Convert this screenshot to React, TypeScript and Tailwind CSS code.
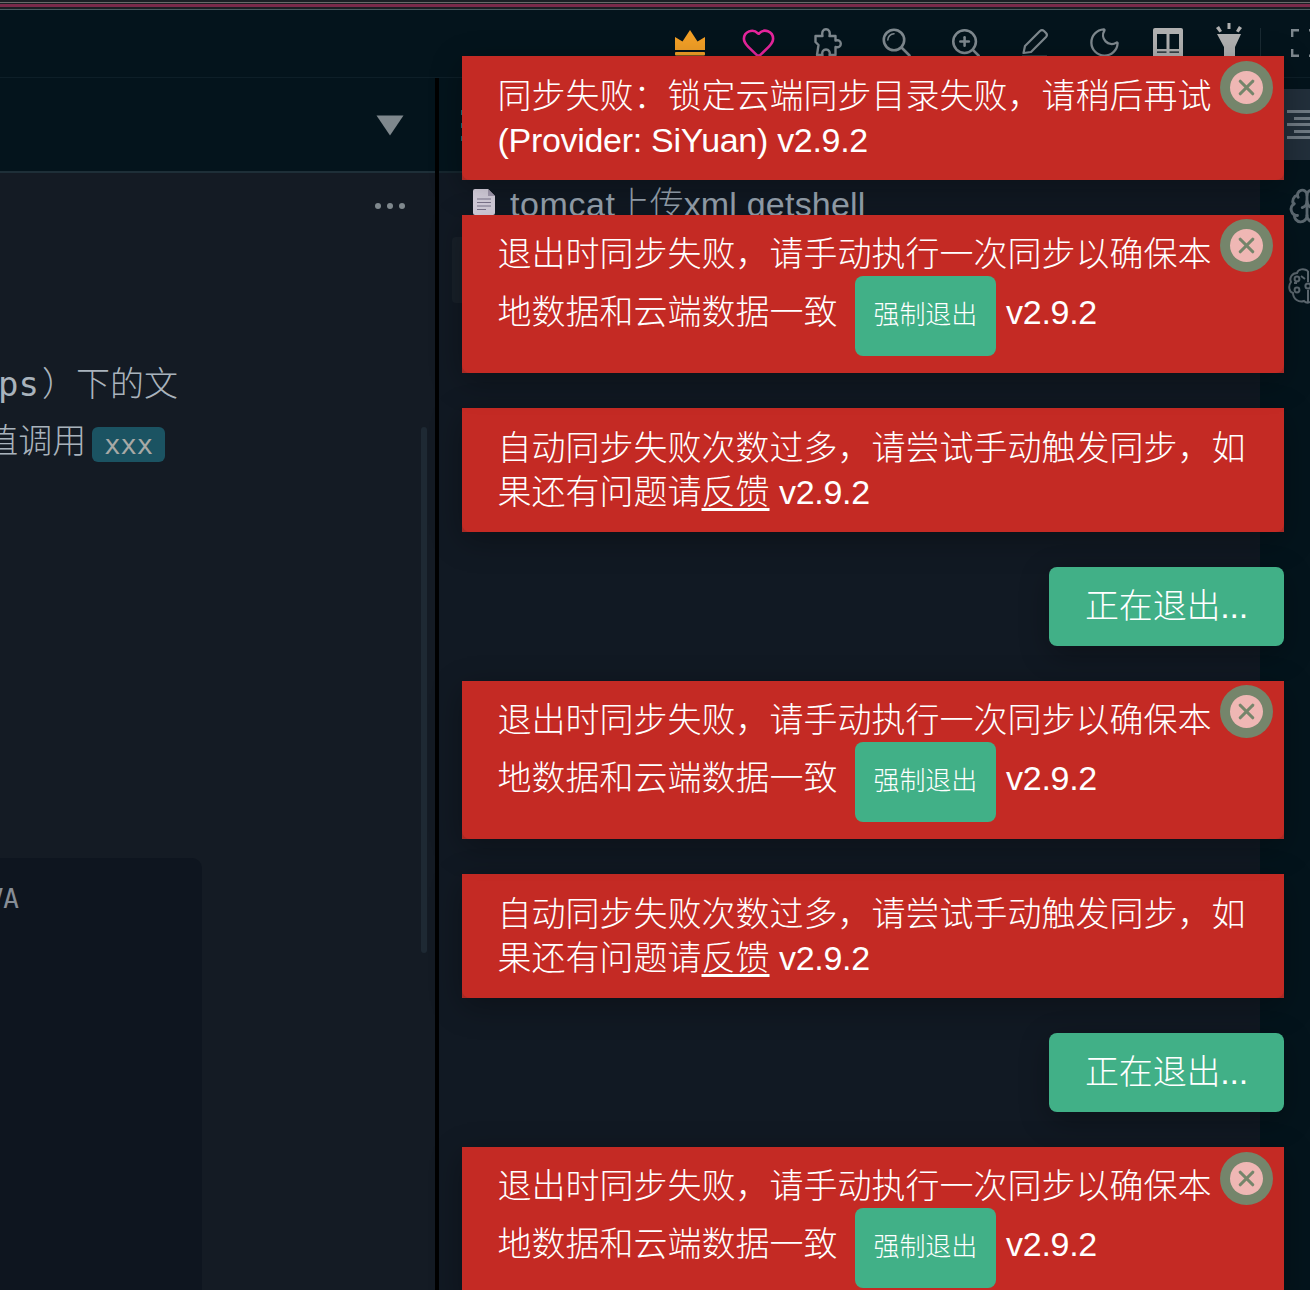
import { Brain, Heart, Moon, X, ZoomIn } from "lucide-react";

function CrownIcon() {
  return (
    <svg width="30" height="26" viewBox="0 0 30 26" fill="#f29f26">
      <path d="M0 7 L7.5 11.5 L15 0 L22.5 11.5 L30 7 V20 H0 Z" />
      <rect x="0" y="22" width="30" height="3.5" rx="1" />
    </svg>
  );
}

function PuzzleIcon() {
  return (
    <svg width="29" height="29" viewBox="0 0 29 29" fill="none" stroke="#7e888e" strokeWidth="2.4" strokeLinejoin="round">
      <path d="M2.5 8 H9.5 C8.5 3.5 10.5 1.2 13 1.2 C15.5 1.2 17.5 3.5 16.5 8 H22.5 V12.5 C26 11.5 27.8 13.5 27.8 15.8 C27.8 18 26 20 22.5 19 V27 H16.5 C17.5 23.5 15.5 21.5 13 21.5 C10.5 21.5 8.5 23.5 9.5 27 H4 L5.5 17 L2.5 14 Z" />
    </svg>
  );
}

function SearchIcon() {
  return (
    <svg width="29" height="29" viewBox="0 0 29 29" fill="none" stroke="#7e888e" strokeWidth="2.6" strokeLinecap="round">
      <circle cx="12" cy="12" r="10.2" />
      <path d="M5.8 12 A6.2 6.2 0 0 1 12 5.8" strokeWidth="1.6" />
      <path d="M20 20 L27.5 27.5" />
    </svg>
  );
}

function PencilIcon() {
  return (
    <svg width="28" height="29" viewBox="0 0 28 29" fill="none" stroke="#7e888e" strokeWidth="2.2" strokeLinejoin="round">
      <path d="M2.5 25 L4 18 L19 3 Q21 1.2 23 3 L25 5 Q26.8 7 25 9 L10 24 Z" />
      <path d="M1 28 H26" stroke="#3a474e" strokeWidth="1.4" />
    </svg>
  );
}

function BookIcon() {
  return (
    <svg width="30" height="32" viewBox="0 0 30 32" fill="#b0b0b0">
      <path d="M2 0 H28 A2 2 0 0 1 30 2 V32 H0 V2 A2 2 0 0 1 2 0 Z" />
      <rect x="4" y="6" width="9.5" height="15" fill="#04141c" />
      <rect x="16.5" y="6" width="9.5" height="15" fill="#04141c" />
      <rect x="4" y="23.5" width="9.5" height="1.2" fill="#04141c" />
      <rect x="16.5" y="23.5" width="9.5" height="1.2" fill="#04141c" />
    </svg>
  );
}

function TorchIcon() {
  return (
    <svg width="30" height="36" viewBox="0 0 30 36" fill="#b0b0b0">
      <rect x="13.5" y="0" width="3" height="6" />
      <path d="M2 5 L5 3 L8 8 L5.5 9.5 Z" />
      <path d="M28 5 L25 3 L22 8 L24.5 9.5 Z" />
      <path d="M3 11 H27 L21 24 V36 H10 V24 Z" />
    </svg>
  );
}

function FullscreenIcon() {
  return (
    <svg width="28" height="28" viewBox="0 0 28 28" fill="none" stroke="#7e888e" strokeWidth="2.4">
      <path d="M8 1.2 H1.2 V8" />
      <path d="M18 1.2 H26.8 V8" />
      <path d="M8 26.8 H1.2 V20" />
      <path d="M18 26.8 H26.8 V20" />
    </svg>
  );
}

function FileIcon() {
  return (
    <svg width="22" height="26" viewBox="0 0 22 26" className="mb-[4px] shrink-0">
      <path d="M2 0 H15 L22 7 V24 A2 2 0 0 1 20 26 H2 A2 2 0 0 1 0 24 V2 A2 2 0 0 1 2 0 Z" fill="#dcd6e4" />
      <path d="M15 0 L22 7 H15 Z" fill="#a79fb4" />
      <path d="M4 10 H18 M4 13.5 H18 M4 17 H18 M4 20.5 H13" stroke="#7f7890" strokeWidth="1.2" />
    </svg>
  );
}

function CircuitBrainIcon() {
  return (
    <svg width="40" height="36" viewBox="0 0 40 36" fill="none" stroke="#5c6870" strokeWidth="2" className="mt-[43px]">
      <path d="M20 3 C16 0 10 1 9 5 C4 5 1 10 3 14 C0 18 1 24 5 25 C5 31 11 35 16 33 C18 35 20 35 22 34" />
      <path d="M20 3 V14 M20 22 V34 M9 15 H6 M13 8 L17 11" />
      <circle cx="9" cy="11" r="2.4" />
      <circle cx="9" cy="22" r="2.4" />
      <circle cx="20" cy="18" r="2.6" />
    </svg>
  );
}

function CloseButton({ top }: { top: string }) {
  return (
    <div className={`absolute right-[11px] flex h-[53px] w-[53px] items-center justify-center rounded-full bg-[#75856b] ${top}`}>
      <div className="flex h-[33px] w-[33px] items-center justify-center rounded-full bg-[#efb7b4]">
        <X size={25} strokeWidth={3} color="#75856b" />
      </div>
    </div>
  );
}

function SyncFailed({ closeTop = "top-[4px]" }: { closeTop?: string }) {
  return (
    <div className="relative w-full bg-[#a82a25] text-white">
      <div className="rounded-b-[8px] bg-[#c42a24] pb-[17px] pl-[35.5px] pr-[70px] pt-[17px] leading-[44px]">
        退出时同步失败，请手动执行一次同步以确保本
        <br />
        地数据和云端数据一致
        <span className="ml-[17px] mr-[10px] inline-block rounded-[8px] bg-[#41b087] px-[19px] pb-[18px] pt-[16px] text-[26px] leading-[46px] tracking-[-0.1px]">
          强制退出
        </span>
        <span className="tracking-[-0.3px]">v2.9.2</span>
      </div>
      <CloseButton top={closeTop} />
    </div>
  );
}

function TooManyFailures() {
  return (
    <div className="w-full bg-[#a82a25] text-white">
      <div className="rounded-b-[8px] bg-[#c42a24] py-[17.5px] pl-[35.5px] pr-9 leading-[44.5px]">
        自动同步失败次数过多，请尝试手动触发同步，如果还有问题请<span className="underline underline-offset-4">反馈</span> <span className="tracking-[-0.3px]">v2.9.2</span>
      </div>
    </div>
  );
}

function Exiting() {
  return (
    <div className="rounded-[8px] bg-[#41b087] px-9 pb-[17.5px] pt-[16.5px] leading-[45px] tracking-[-0.2px] text-white">正在退出...</div>
  );
}

export default function App() {
  return (
    <div className="relative h-[1290px] w-full overflow-hidden bg-[#04141c] font-['Liberation_Sans','Noto_Sans_CJK_SC',sans-serif] text-[34px] font-light">
      {/* window stripes */}
      <div className="flex h-[10px] flex-col bg-[#1b1f24]">
        <div className="mt-[2px] h-px bg-[#6a6a6a]" />
        <div className="mt-px h-[3px] bg-[#7a2a4a]" />
        <div className="mt-[1.5px] h-px bg-[#4a5a60]" />
      </div>

      {/* toolbar */}
      <div className="flex h-[68px] items-center overflow-hidden border-b border-[#0e1f28] pb-[2px] pl-[655px]">
        <div className="flex w-[69px] shrink-0 justify-center"><CrownIcon /></div>
        <div className="flex w-[69px] shrink-0 justify-center"><Heart size={35} strokeWidth={1.8} color="#e6259c" /></div>
        <div className="flex w-[69px] shrink-0 justify-center"><PuzzleIcon /></div>
        <div className="flex w-[69px] shrink-0 justify-center"><SearchIcon /></div>
        <div className="flex w-[69px] shrink-0 justify-center"><ZoomIn size={34} strokeWidth={1.8} color="#7e888e" /></div>
        <div className="flex w-[70px] shrink-0 justify-center"><PencilIcon /></div>
        <div className="flex w-[69px] shrink-0 justify-center"><Moon size={35} strokeWidth={1.6} color="#7e888e" /></div>
        <div className="flex w-[58px] shrink-0 justify-center pt-[2px]"><BookIcon /></div>
        <div className="flex w-[63px] shrink-0 justify-center pb-[4px]"><TorchIcon /></div>
        <div className="h-[30px] w-px shrink-0 bg-[#1a2a32]" />
        <div className="ml-[30px] shrink-0"><FullscreenIcon /></div>
      </div>

      <div className="flex h-[1212px]">
        {/* left panel */}
        <div className="relative flex w-[435px] flex-col bg-[#141b24]">
          <div className="flex h-[95px] items-center justify-end border-b-2 border-[#1e2f38] bg-[#04141c] pr-[31px] pt-[2px]">
            <svg width="28" height="21" viewBox="0 0 28 21" fill="#7f888d">
              <path d="M0.5 0.5 H27.5 L14 20.5 Z" />
            </svg>
          </div>
          <div className="flex justify-end gap-[6px] pr-[30px] pt-[30px]">
            <div className="h-[6px] w-[6px] rounded-full bg-[#7f888d]" />
            <div className="h-[6px] w-[6px] rounded-full bg-[#7f888d]" />
            <div className="h-[6px] w-[6px] rounded-full bg-[#7f888d]" />
          </div>
          <div className="mt-[147px] flex w-[178px] justify-end overflow-hidden whitespace-nowrap leading-[57px] text-[#a9b3bc]">
            <span className="mr-[3px] font-['DejaVu_Sans_Mono',monospace]">ps</span>）下的文
          </div>
          <div className="flex w-[165px] items-center justify-end overflow-hidden whitespace-nowrap leading-[57px] text-[#a9b3bc]">
            <span className="shrink-0">值调用</span>
            <span className="ml-[6px] mt-[6px] shrink-0 rounded-[6px] bg-[#1b5362] px-[12px] font-['DejaVu_Sans_Mono',monospace] text-[27px] font-normal leading-[35px] text-[#a7a9a6]">
              xxx
            </span>
          </div>
          <div className="mt-auto h-[432px] w-[202px] overflow-hidden rounded-tr-[10px] bg-[#0e151f] pt-[26px]">
            <div className="flex w-[19px] justify-end whitespace-nowrap font-['DejaVu_Sans_Mono',monospace] text-[26px] leading-[30px] text-[#868d96]">
              VA
            </div>
          </div>
          {/* scrollbar */}
          <div className="absolute left-[421px] top-[349px] h-[526px] w-[6px] rounded-full bg-[#1e2933]" />
        </div>

        <div className="w-[4px] shrink-0 bg-black" />

        {/* editor column */}
        <div className="flex-1 overflow-hidden bg-[#111923]">
          <div className="flex h-[95px] flex-col gap-[8px] border-b-2 border-[#16262e] bg-[#04141c] pl-[22px] pt-[32px]">
            <div className="h-[5px] w-px bg-[#1d6f78]" />
            <div className="h-[5px] w-px bg-[#1d6f78]" />
            <div className="h-[5px] w-px bg-[#1d6f78]" />
          </div>
          <div className="flex items-center gap-[15px] whitespace-nowrap pl-[34px] pt-[11px] leading-[40px] text-[#9aa6b2]">
            <FileIcon />
            <div>
              <span className="tracking-[0.6px]">tomcat</span>上传<span className="tracking-[0.2px]">xml getshell</span>
            </div>
          </div>
          <div className="mx-[13px] mt-[13px] h-[66px] rounded-[4px] bg-[#182029]" />
        </div>

        {/* right dock */}
        <div className="w-[50px] shrink-0 bg-[#04141c] pt-[11px]">
          <div className="flex h-[71px] flex-col items-start gap-[3.5px] bg-[#222f3b] pl-[27px] pt-[21px]">
            <div className="h-[3px] w-full bg-[#6f7a84]" />
            <div className="ml-[7px] h-[3px] w-full bg-[#6f7a84]" />
            <div className="h-[3px] w-full bg-[#6f7a84]" />
            <div className="ml-[7px] h-[3px] w-full bg-[#6f7a84]" />
            <div className="h-[3px] w-full bg-[#6f7a84]" />
          </div>
          <div className="overflow-hidden pl-[28px] pt-[27px]">
            <Brain size={38} strokeWidth={1.8} color="#5c6870" className="shrink-0" />
            <CircuitBrainIcon />
          </div>
        </div>
      </div>

      {/* notifications */}
      <div className="absolute right-[26px] top-[56px] flex w-[822px] flex-col items-end gap-[35px] [&>*]:shadow-[0_8px_30px_rgba(0,0,0,0.3)]">
        <div className="relative w-full bg-[#a82a25] text-white">
          <div className="rounded-b-[8px] bg-[#c42a24] py-[17.5px] pl-[35.5px] pr-[70px] leading-[44.5px]">
            同步失败：锁定云端同步目录失败，请稍后再试 <span className="tracking-[-0.3px]">(Provider: SiYuan) v2.9.2</span>
          </div>
          <CloseButton top="top-[5px]" />
        </div>
        <SyncFailed />
        <TooManyFailures />
        <Exiting />
        <SyncFailed />
        <TooManyFailures />
        <Exiting />
        <SyncFailed closeTop="top-[5px]" />
      </div>
    </div>
  );
}
